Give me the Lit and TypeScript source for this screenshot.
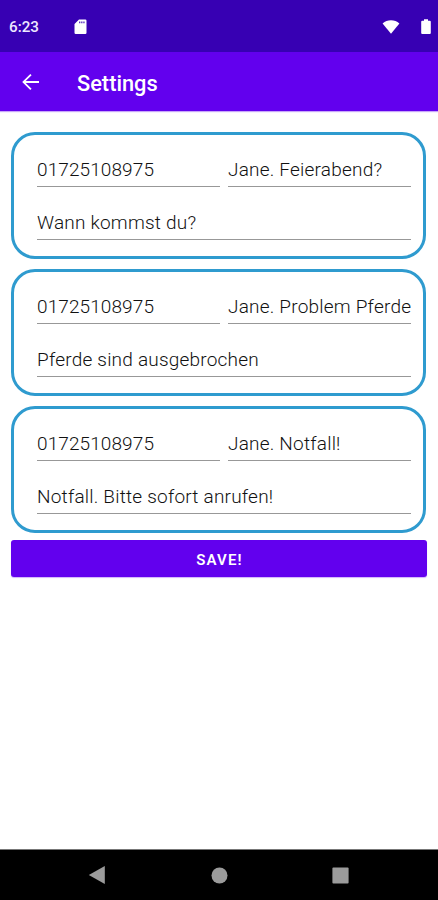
import { LitElement, html, css } from "lit";
import { customElement, property } from "lit/decorators.js";

interface Contact {
  phone: string;
  label: string;
  message: string;
}

const CONTACTS: Contact[] = [
  { phone: "01725108975", label: "Jane. Feierabend?", message: "Wann kommst du?" },
  { phone: "01725108975", label: "Jane. Problem Pferde", message: "Pferde sind ausgebrochen" },
  { phone: "01725108975", label: "Jane. Notfall!", message: "Notfall. Bitte sofort anrufen!" },
];

@customElement("contact-card")
export class ContactCard extends LitElement {
  @property({ attribute: false }) contact!: Contact;

  static styles = css`
    :host {
      display: block;
      box-sizing: border-box;
      height: 127px;
      padding: 21px 12px 0 23px;
      border: 3px solid #2f9bcf;
      border-radius: 24px;
      background: #fff;
    }
    .row {
      display: grid;
      grid-template-columns: repeat(2, minmax(0, 1fr));
      column-gap: 8px;
    }
    .row + .row {
      grid-template-columns: minmax(0, 1fr);
      margin-top: 22px;
    }
    .field {
      height: 31px;
      box-sizing: border-box;
      border-bottom: 1px solid #989898;
      font: 300 19px/28px Roboto, sans-serif;
      letter-spacing: 0.21px;
      color: #111;
      white-space: nowrap;
    }
    .phone {
      letter-spacing: 0.1px;
    }
  `;

  render() {
    return html`
      <div class="row">
        <div class="field phone">${this.contact.phone}</div>
        <div class="field">${this.contact.label}</div>
      </div>
      <div class="row">
        <div class="field">${this.contact.message}</div>
      </div>
    `;
  }
}

@customElement("app-root")
export class AppRoot extends LitElement {
  static styles = css`
    :host {
      display: flex;
      flex-direction: column;
      height: 900px;
      background: #fff;
      font-family: Roboto, sans-serif;
      overflow: hidden;
    }
    svg {
      display: block;
      fill: currentColor;
    }
    .status {
      display: flex;
      align-items: center;
      box-sizing: border-box;
      height: 52px;
      padding: 1px 7.5px 0 9px;
      background: #3700b3;
      color: #fff;
    }
    .time {
      width: 65px;
      font-size: 15.2px;
      font-weight: 500;
      line-height: 20px;
      color: #eee8ff;
    }
    .grow {
      flex: 1;
    }
    .wifi {
      margin-right: 20.5px;
    }
    .toolbar {
      display: flex;
      align-items: center;
      box-sizing: border-box;
      height: 59px;
      padding-left: 21px;
      background: #6200ee;
      color: #fff;
      box-shadow: 0 1px 1px rgba(98, 0, 238, 0.35);
    }
    .title {
      margin-left: 37px;
      padding-top: 4px;
      font-size: 21.8px;
      font-weight: 500;
      line-height: 28px;
    }
    .content {
      flex: 1;
      padding: 21px 11px 0;
    }
    .cards {
      display: grid;
      row-gap: 10px;
      margin-right: 1px;
    }
    .save {
      display: block;
      width: 100%;
      height: 37px;
      margin-top: 7px;
      padding: 2px 0 0 1px;
      border: 0;
      border-radius: 3px;
      background: #6200ee;
      color: #fff;
      font: 600 15px/20px Roboto, sans-serif;
      letter-spacing: 1.1px;
      box-shadow: 0 1px 1px rgba(98, 0, 238, 0.3);
    }
    .nav {
      display: flex;
      align-items: center;
      justify-content: space-between;
      box-sizing: border-box;
      height: 51px;
      padding: 0 89px 0 88px;
      border-top: 1px solid #777;
      background: #000;
      color: #9b9b9b;
    }
  `;

  render() {
    return html`
      <div class="status">
        <span class="time">6:23</span>
        <svg width="13" height="16" viewBox="0 0 13 16">
          <path fill-rule="evenodd" d="M5 .5H11.3Q12.5 .5 12.5 1.7V13.8Q12.5 15 11.3 15H1.7Q.5 15 .5 13.8V5ZM5.2 2.6V4.2H6.3V2.6ZM7.3 2.6V4.2H8.4V2.6ZM9.4 2.6V4.2H10.5V2.6Z"></path>
        </svg>
        <span class="grow"></span>
        <svg class="wifi" width="18" height="14" viewBox="0 0 18 14">
          <path d="M.6 3.6C3 1.2 5.8 .2 9 .2S15 1.2 17.4 3.6L9 13.8Z"></path>
        </svg>
        <svg width="10" height="16" viewBox="0 0 10 16">
          <path d="M3 .3H7V1.8H8.8Q9.8 1.8 9.8 2.8V14Q9.8 15 8.8 15H1.2Q.2 15 .2 14V2.8Q.2 1.8 1.2 1.8H3Z"></path>
        </svg>
      </div>
      <div class="toolbar">
        <svg width="19" height="18" viewBox="0 0 19 18">
          <path d="M9.3 .9L10.6 2.2L4.7 8.1H18V9.9H4.7L10.6 15.8L9.3 17.1L1.2 9Z"></path>
        </svg>
        <span class="title">Settings</span>
      </div>
      <div class="content">
        <div class="cards">
          ${CONTACTS.map((c) => html`<contact-card .contact=${c}></contact-card>`)}
        </div>
        <button class="save">SAVE!</button>
      </div>
      <div class="nav">
        <svg width="18" height="20" viewBox="0 0 18 20"><path d="M.8 10L16.8 .9V19.1Z"></path></svg>
        <svg width="17" height="17" viewBox="0 0 17 17"><circle cx="8.5" cy="8.5" r="8"></circle></svg>
        <svg width="17" height="17" viewBox="0 0 17 17"><rect x=".4" y=".4" width="16.2" height="16.2" rx="1"></rect></svg>
      </div>
    `;
  }
}
